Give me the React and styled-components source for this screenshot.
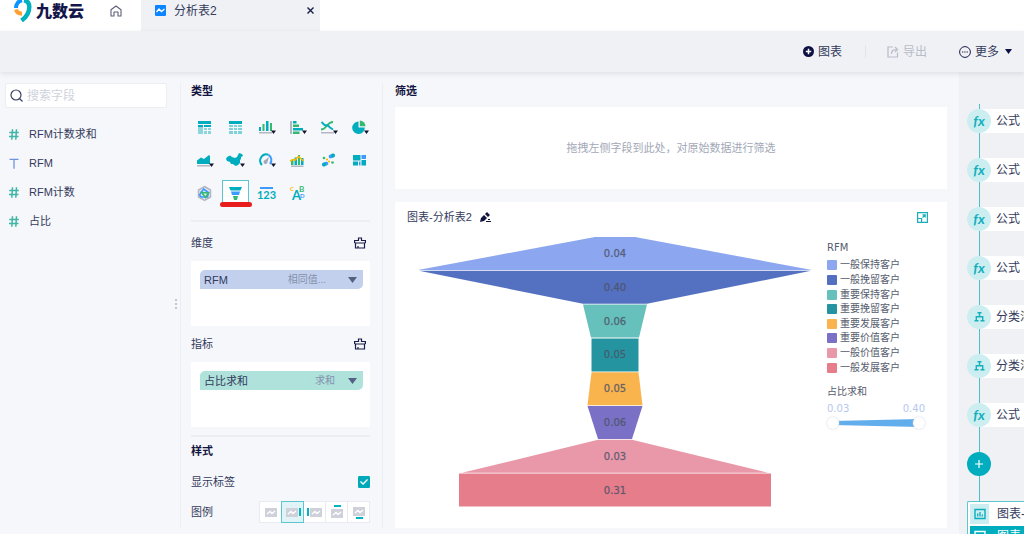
import React, { useState } from "react";
import styled, { createGlobalStyle } from "styled-components";

const fields = [
  { name: "RFM计数求和", type: "number" },
  { name: "RFM", type: "text" },
  { name: "RFM计数", type: "number" },
  { name: "占比", type: "number" },
];

const chartTypes = [
  { id: "group", label: "分组表" },
  { id: "cross", label: "明细表" },
  { id: "column", label: "柱形图", menu: true },
  { id: "bar", label: "条形图", menu: true },
  { id: "line", label: "折线图", menu: true },
  { id: "pie", label: "饼图", menu: true },
  { id: "area", label: "面积图", menu: true },
  { id: "map", label: "地图", menu: true },
  { id: "gauge", label: "仪表盘", menu: true },
  { id: "combo", label: "组合图" },
  { id: "scatter", label: "散点图" },
  { id: "tree", label: "矩形树图" },
  { id: "radar", label: "雷达图" },
  { id: "funnel", label: "漏斗图" },
  { id: "kpi", label: "指标卡" },
  { id: "cloud", label: "词云" },
];

const stages = [
  { name: "一般保持客户", value: "0.04", color: "#8ca6f0", top: 40, bottom: 394 },
  { name: "一般挽留客户", value: "0.40", color: "#5470c0", top: 392, bottom: 64 },
  { name: "重要保持客户", value: "0.06", color: "#66c0bb", top: 64, bottom: 48 },
  { name: "重要挽留客户", value: "0.05", color: "#2495a0", top: 47, bottom: 47 },
  { name: "重要发展客户", value: "0.05", color: "#f9b44e", top: 47, bottom: 55 },
  { name: "重要价值客户", value: "0.06", color: "#7a71c6", top: 55, bottom: 34 },
  { name: "一般价值客户", value: "0.03", color: "#e898a9", top: 34, bottom: 306 },
  { name: "一般发展客户", value: "0.31", color: "#e67d8b", top: 312, bottom: 312 },
];

const steps = ["公式", "公式", "公式", "公式", "分类汇总", "分类汇总", "公式"];

const typeArt = {
  group: (
    <>
      <path fill="#00adbe" d="M2 2h13v3H2zM2 6h5v2H2zM8 6h7v2H8z" />
      <path fill="#8bd6dd" d="M2 8h5v7H2zM8 9h3v2H8zM12 9h3v2h-3zM8 12h3v3H8zM12 12h3v3h-3z" />
    </>
  ),
  cross: (
    <>
      <path fill="#00adbe" d="M2 2h13v3H2z" />
      <path fill="#7fd2da" d="M2 6h4v2H2zM7 6h3v2H7zM11 6h4v2h-4zM2 9h4v2H2zM7 9h3v2H7zM11 9h4v2h-4zM2 12h4v3H2zM7 12h3v3H7zM11 12h4v3h-4z" />
    </>
  ),
  column: (
    <>
      <path fill="#00adbe" d="M1 8h2v4H1zM8 2h2.500v10H8z" />
      <path fill="#35b870" d="M4.500 5h2v7h-2zM12 4h2v8h-2z" />
      <path fill="#b4b7c4" d="M1 13h13v1.500H1z" />
    </>
  ),
  bar: (
    <>
      <path fill="#b4b7c4" d="M1 2h2v13H1z" />
      <path fill="#00adbe" d="M4 2h3.500v2.500H4zM4 9h10v2.500H4z" />
      <path fill="#35b870" d="M4 5.500h6V8H4zM4 12.500h6.500V15H4z" />
    </>
  ),
  line: (
    <>
      <path fill="none" stroke="#35b870" strokeWidth="1.800" d="M1 10.500c3 0 4-1.500 6-4s3-3.500 6-3.500" />
      <path fill="none" stroke="#00adbe" strokeWidth="1.800" d="M1.500 3l3 3c3 0 4 .5 5.500 2.500l3 2" />
      <path fill="#b4b7c4" d="M1 13h13v1.500H1z" />
    </>
  ),
  pie: (
    <>
      <path fill="#00adbe" d="M7.500 2.500V8.500h6.300A6.300 6.300 0 1 1 7.500 2.500z" />
      <path fill="#35b870" d="M8.800 1.500a6 6 0 0 1 5.700 5.800H8.800z" />
    </>
  ),
  area: (
    <>
      <path fill="#00adbe" d="M1 8.500l4-3 3 1.500 5-4 1 1v8H1z" />
      <path fill="#b4b7c4" d="M1 13h13v1.500H1z" />
    </>
  ),
  map: (
    <path
      fill="#00adbe"
      d="M0 5l3-1.500 2 1.500 3 1 2-1 1-2 1-2 3 1 1 2-2 1v2l-1 1v3l-2 2-2 1-2-1-1-1-2 0-1-2-3-1-1-2z"
    />
  ),
  gauge: (
    <>
      <path fill="none" stroke="#00adbe" strokeWidth="2" d="M4 13A6.200 6.200 0 0 1 10.500 2.800" />
      <path fill="none" stroke="#3c9bff" strokeWidth="2" d="M10.500 2.800A6.200 6.200 0 0 1 12 12" />
      <path fill="#a4a8b8" d="M11 5L9.500 10a2 2 0 1 1-2.500-2z" />
    </>
  ),
  combo: (
    <>
      <path fill="#35b870" d="M2 8h2.500v5H2zM9 3h2v10H9z" />
      <path fill="#00adbe" d="M5.500 5.500H8V13H5.500zM12 6h2.500v7H12z" />
      <path fill="none" stroke="#f9b900" strokeWidth="1.600" d="M1 9l3-1.500 2 .5 3.500-3.500L14.500 9" />
      <path fill="#b4b7c4" d="M2 13.500h12.500V15H2z" />
    </>
  ),
  scatter: (
    <>
      <path stroke="#3c9bff" strokeWidth="3.600" strokeLinecap="round" d="M10.500 4.500L13 3.500" />
      <circle cx="13" cy="3.500" r="1.900" fill="#00adbe" />
      <path stroke="#3c9bff" strokeWidth="3.600" strokeLinecap="round" d="M4 12.500l2.500-1" />
      <circle cx="4" cy="12.500" r="1.900" fill="#00adbe" />
      <circle cx="4" cy="6" r="1.300" fill="#35b870" />
      <circle cx="7" cy="7.500" r="1.100" fill="#f9b900" />
      <circle cx="9" cy="9.500" r="1.100" fill="#f9b900" />
      <circle cx="12.500" cy="10.500" r="1.300" fill="#35b870" />
    </>
  ),
  tree: (
    <>
      <path fill="#00adbe" d="M2 3h7.500v5.500H2zM2 9.500h5v4H2zM10.500 8H15v5.500h-4.500z" />
      <path fill="#3c9bff" d="M10.500 3H15v4h-4.500zM8 9.500h1.500v4H8z" />
    </>
  ),
  radar: (
    <>
      <path fill="#e4e6ee" stroke="#b4b7c4" strokeWidth="1.500" d="M8.500 1.500l6 3.500v7l-6 3.500-6-3.500V5z" />
      <path fill="none" stroke="#3c9bff" strokeWidth="1.600" d="M7.500 4l5 3.500-1 4.500H5L3.500 10z" />
      <path fill="none" stroke="#35b870" strokeWidth="1.600" d="M5.500 7.500l7 .5-3 4.500z" />
    </>
  ),
  funnel: (
    <>
      <path fill="#00adbe" d="M2 2h13l-1.500 3.500h-10z" />
      <path fill="#3c9bff" d="M4 6.500h9L12 10H5z" />
      <path fill="#35b870" d="M6 11h5l-1 4H7z" />
    </>
  ),
  kpi: (
    <>
      <path fill="#3c9bff" d="M2 2h13v2H2z" />
      <text x="8.500" y="14" textAnchor="middle" fontSize="11" fontWeight="700" fill="#00adbe">123</text>
    </>
  ),
  cloud: (
    <>
      <text x="3" y="15" fontSize="13" fontWeight="700" fill="#00adbe">A</text>
      <text x="10" y="7" fontSize="8" fontWeight="700" fill="#35b870">B</text>
      <text x="1" y="6" fontSize="6" fontWeight="700" fill="#f9b900">C</text>
      <text x="11" y="13" fontSize="6" fontWeight="700" fill="#3c9bff">D</text>
    </>
  ),
};

const legendPlaces = ["无", "右", "左", "上", "下"];
const legendMarks = [null, "M14 4h2v8h-2z", "M0 4h2v8H0z", "M5 1h7v2H5z", "M5 13h7v2H5z"];
const legendShift = [[0, 0], [-1, 0], [1, 0], [0, 1], [0, -1]];

function Caret() {
  return (
    <svg width="9" height="6" viewBox="0 0 9 6" aria-hidden="true">
      <path fill="currentColor" d="M0 0h9L4.500 6z" />
    </svg>
  );
}

function ClearIcon() {
  return (
    <svg width="12" height="12" viewBox="0 0 12 12" fill="none" stroke="#1a1d48" strokeWidth="1.200" aria-hidden="true">
      <path d="M.6 6V3.500H4.500V1h3v2.500h3.900V6M.6 6h10.800M1.500 6v5h9V6M4 9v2" />
    </svg>
  );
}

function ChartGlyph() {
  return (
    <svg width="12" height="12" viewBox="0 0 12 12" fill="none" stroke="currentColor" aria-hidden="true">
      <path strokeWidth="1.400" d="M1 1.500h10v9H1z" />
      <path strokeWidth="1.300" d="M3.700 5.500v3M6 4v4.500M8.300 6.500v2" />
    </svg>
  );
}

function Header() {
  return (
    <TopBar>
      <Brand href="#">
        <svg width="18" height="22" viewBox="0 0 18 22" fill="none" aria-hidden="true">
          <path stroke="#0a94ff" strokeWidth="4" d="M2 8C2 4 4.500 1 8 .3" />
          <path stroke="#ff9f35" strokeWidth="4" d="M2 9.500C2.500 12 4.500 13.500 8 13.700" />
          <path stroke="#00b1bf" strokeWidth="4.400" d="M10 .3c3.500 .7 5.300 3.500 5.300 6.700 0 6-3.300 10.500-7.800 13.500" />
        </svg>
        <BrandName>九数云</BrandName>
      </Brand>
      <HomeButton aria-label="首页">
        <svg width="12" height="12" viewBox="0 0 12 12" fill="none" stroke="#5d6078" aria-hidden="true">
          <path strokeWidth="1.100" strokeLinejoin="round" d="M1 11V4.800L6 1l5 3.800V11H8V7H4v4z" />
        </svg>
      </HomeButton>
      <Tab>
        <svg width="11" height="11" viewBox="0 0 11 11" aria-hidden="true">
          <rect width="11" height="11" rx="1" fill="#0a84ff" />
          <path fill="none" stroke="#fff" strokeWidth="1.300" d="M1.500 7L4 4l2.500 2.500L9.500 4" />
        </svg>
        <TabName>分析表2</TabName>
        <CloseButton aria-label="关闭">
          <svg width="7" height="7" viewBox="0 0 7 7" stroke="#1a1d48" strokeWidth="1.400" aria-hidden="true">
            <path d="M.5.5l6 6M6.500.5l-6 6" />
          </svg>
        </CloseButton>
      </Tab>
    </TopBar>
  );
}

function Toolbar() {
  return (
    <ToolRow>
      <ToolButton>
        <svg width="11" height="11" viewBox="0 0 11 11" aria-hidden="true">
          <circle cx="5.500" cy="5.500" r="5.500" fill="#0d1045" />
          <path stroke="#fff" strokeWidth="1.500" d="M5.500 2.800v5.400M2.800 5.500h5.400" />
        </svg>
        图表
      </ToolButton>
      <ToolDivider />
      <ToolButton disabled>
        <svg width="12" height="12" viewBox="0 0 12 12" fill="none" stroke="currentColor" strokeWidth="1.200" aria-hidden="true">
          <path d="M6 1H1v10h9.500V6.500M4.500 8c0-3 1-4.500 5-4.500M8 1l2.500 2.500L8 6" />
        </svg>
        导出
      </ToolButton>
      <ToolButton $wide>
        <svg width="12" height="12" viewBox="0 0 12 12" fill="none" stroke="#1a1d48" aria-hidden="true">
          <circle cx="6" cy="6" r="5.400" />
          <path strokeWidth="1.200" strokeDasharray="1.300 1" d="M3 6h6" />
        </svg>
        更多
        <MoreCaret>
          <svg width="7" height="5" viewBox="0 0 7 5" aria-hidden="true">
            <path fill="#0d1045" d="M0 0h7L3.500 5z" />
          </svg>
        </MoreCaret>
      </ToolButton>
    </ToolRow>
  );
}

function FieldPanel() {
  return (
    <Fields>
      <SearchBox>
        <svg width="13" height="13" viewBox="0 0 13 13" fill="none" stroke="#3d4263" strokeWidth="1.200" aria-hidden="true">
          <circle cx="6" cy="6" r="5" />
          <path d="M9.500 9.500l3 3" />
        </svg>
        <SearchInput type="text" placeholder="搜索字段" aria-label="搜索字段" />
      </SearchBox>
      <FieldList>
        {fields.map((field) => (
          <FieldItem key={field.name}>
            <svg width="10" height="11" viewBox="0 0 10 11" fill="none" aria-hidden="true">
              {field.type === "number" ? (
                <path stroke="#3fb5a5" strokeWidth="1.500" d="M3.500 .3L2.800 10.700M7.500 .3L6.800 10.700M.3 3.500h9.500M0 7.500h9.500" />
              ) : (
                <path stroke="#6f93e0" strokeWidth="1.300" d="M.5 1.300h9M5 1.300v9.500" />
              )}
            </svg>
            {field.name}
          </FieldItem>
        ))}
      </FieldList>
      <DragHandle />
    </Fields>
  );
}

function SettingsPanel() {
  const [chartType, setChartType] = useState("funnel");
  const [place, setPlace] = useState(1);
  const [showLabel, setShowLabel] = useState(true);

  return (
    <Settings>
      <Heading>类型</Heading>
      <TypeGrid>
        {chartTypes.map((type) => (
          <TypeButton
            key={type.id}
            aria-label={type.label}
            $active={chartType === type.id}
            onClick={() => setChartType(type.id)}
          >
            <TypeIcon width="17" height="16" viewBox="0 0 17 16" aria-hidden="true">
              {typeArt[type.id]}
              {type.menu && <path fill="#12142c" d="M13 11.500h5L15.500 15z" />}
            </TypeIcon>
            {chartType === type.id && <Underline />}
          </TypeButton>
        ))}
      </TypeGrid>
      <Rule />
      <SectionHead>
        维度
        <ClearButton aria-label="清空维度"><ClearIcon /></ClearButton>
      </SectionHead>
      <DropZone>
        <Pill $color="#c2d0ee">
          RFM
          <PillHint $gap="22px">相同值...</PillHint>
          <Caret />
        </Pill>
      </DropZone>
      <SectionHead>
        指标
        <ClearButton aria-label="清空指标"><ClearIcon /></ClearButton>
      </SectionHead>
      <DropZone>
        <Pill $color="#aee2db">
          占比求和
          <PillHint $gap="13px">求和</PillHint>
          <Caret />
        </Pill>
      </DropZone>
      <Rule $tight />
      <StyleHeading>样式</StyleHeading>
      <OptionRow>
        <label htmlFor="show-label">显示标签</label>
        <Check
          id="show-label"
          type="checkbox"
          checked={showLabel}
          onChange={(e) => setShowLabel(e.target.checked)}
        />
      </OptionRow>
      <OptionRow>
        <span id="legend-label">图例</span>
        <LegendGroup role="radiogroup" aria-labelledby="legend-label">
          {legendPlaces.map((name, i) => (
            <LegendOption key={name} $active={place === i}>
              <HiddenRadio
                type="radio"
                name="legend"
                aria-label={name}
                checked={place === i}
                onChange={() => setPlace(i)}
              />
              <svg width="16" height="16" viewBox="0 0 16 16" fill="none" aria-hidden="true">
                <g transform={`translate(${legendShift[i].join(" ")})`}>
                  <path fill="#ced0da" d="M2 4h12v9H2z" />
                  <path stroke="#fff" strokeWidth="1.300" d="M4 10l3-2.500 2 2L12 7" />
                </g>
                {legendMarks[i] && <path fill="#00b4c3" d={legendMarks[i]} />}
              </svg>
            </LegendOption>
          ))}
        </LegendGroup>
      </OptionRow>
    </Settings>
  );
}

function FunnelChart() {
  const center = 208;
  const pitch = 33.8;
  return (
    <Funnel viewBox="0 0 412 290" role="img" aria-label="图表-分析表2">
      {stages.map((stage, i) => {
        const y = 5 + i * pitch;
        const t = stage.top / 2;
        const b = stage.bottom / 2;
        return (
          <g key={stage.name}>
            <polygon
              fill={stage.color}
              points={`${center - t},${y} ${center + t},${y} ${center + b},${y + 33} ${center - b},${y + 33}`}
            />
            <FunnelLabel x={center} y={y + 20}>{stage.value}</FunnelLabel>
          </g>
        );
      })}
    </Funnel>
  );
}

function ChartCard() {
  const [low, setLow] = useState(0);
  const [high, setHigh] = useState(100);
  return (
    <Card>
      <CardHead>
        图表-分析表2
        <IconButton aria-label="编辑标题">
          <svg width="11" height="11" viewBox="0 0 11 11" aria-hidden="true">
            <path fill="#12143f" d="M0 10l1-4 3-3 3 3-3 3zM5 2l2-2 3 3-2 2zM6 9h5v1H6zM8 7h2v1H8z" />
          </svg>
        </IconButton>
        <ExpandButton aria-label="放大">
          <svg width="11" height="11" viewBox="0 0 11 11" fill="none" stroke="#1badbb" aria-hidden="true">
            <path strokeWidth="1.200" d="M.6.6h9.800v9.800H.6zM.6 6.500h4v4M5.500 5.500L8 3M5.500 2.800h2.700v2.700" />
          </svg>
        </ExpandButton>
      </CardHead>
      <ChartBody>
        <FunnelChart />
        <Legend>
          <div>RFM</div>
          <LegendList>
            {stages.map((stage) => (
              <LegendItem key={stage.name}>
                <Swatch $color={stage.color} />
                {stage.name}
              </LegendItem>
            ))}
          </LegendList>
          <div>占比求和</div>
          <RangeValues>
            <span>0.03</span>
            <span>0.40</span>
          </RangeValues>
          <RangeBox>
            <svg width="100%" height="8" viewBox="0 0 98 8" preserveAspectRatio="none" aria-hidden="true">
              <path fill="#62aeec" d="M6 2l86-2v8L6 6z" />
            </svg>
            <RangeInput type="range" aria-label="最小值" value={low} onChange={(e) => setLow(+e.target.value)} />
            <RangeInput type="range" aria-label="最大值" value={high} onChange={(e) => setHigh(+e.target.value)} />
          </RangeBox>
        </Legend>
      </ChartBody>
    </Card>
  );
}

function StepPanel() {
  return (
    <Steps>
      <Connector $short />
      {steps.map((step, i) => (
        <React.Fragment key={i}>
          <Step>
            <StepBadge>
              {step === "公式" ? (
                "fx"
              ) : (
                <svg width="11" height="10" viewBox="0 0 11 10" fill="none" stroke="currentColor" strokeWidth="1.400" aria-hidden="true">
                  <path d="M3.500.8h4M5.500 1v4M2.300 8V4.800h6.400V8M.5 8.800h4M6.500 8.800h4" />
                </svg>
              )}
            </StepBadge>
            {step}
          </Step>
          <Connector />
        </React.Fragment>
      ))}
      <AddStep aria-label="添加步骤">
        <svg width="8" height="8" viewBox="0 0 8 8" stroke="#fff" strokeWidth="1.200" aria-hidden="true">
          <path d="M4 0v8M0 4h8" />
        </svg>
      </AddStep>
      <Connector />
      <Outputs>
        <Output>
          <OutputIcon><ChartGlyph /></OutputIcon>
          图表-分析表
        </Output>
        <Output $active>
          <OutputIcon $active><ChartGlyph /></OutputIcon>
          图表-分析表2
        </Output>
      </Outputs>
    </Steps>
  );
}

function App() {
  return (
    <Page>
      <GlobalStyle />
      <Header />
      <Toolbar />
      <Workspace>
        <FieldPanel />
        <SettingsPanel />
        <Main>
          <Heading>筛选</Heading>
          <FilterZone>拖拽左侧字段到此处，对原始数据进行筛选</FilterZone>
          <ChartCard />
        </Main>
        <StepPanel />
      </Workspace>
    </Page>
  );
}

export default App;

const GlobalStyle = createGlobalStyle`
  * {
    box-sizing: border-box;
  }

  body {
    margin: 0;
    font-family: "Liberation Sans", "Noto Sans CJK SC", sans-serif;
    font-size: 11px;
    line-height: 16px;
    color: #343b5c;
    background: #f6f7fa;
  }

  button {
    font: inherit;
    color: inherit;
    background: none;
    border: 0;
    padding: 0;
    cursor: pointer;
  }

  svg {
    display: block;
    flex: none;
  }
`;

const Page = styled.div`
  display: flex;
  flex-direction: column;
  height: 100vh;
  overflow: hidden;
  white-space: nowrap;
`;

const TopBar = styled.header`
  display: flex;
  flex: none;
  height: 31px;
  background: #fff;
`;

const Brand = styled.a`
  display: flex;
  align-items: center;
  gap: 4px;
  height: 22px;
  margin-left: 14px;
  text-decoration: none;
`;

const BrandName = styled.span`
  padding-top: 2px;
  font-size: 16px;
  font-weight: 900;
  color: #14164a;
`;

const HomeButton = styled.button`
  display: flex;
  align-items: center;
  justify-content: center;
  width: 12px;
  height: 22px;
  margin: 0 19px 0 26px;
`;

const Tab = styled.div`
  display: flex;
  align-items: center;
  gap: 8px;
  width: 179px;
  padding: 0 6px 10px 14px;
  background: #f0f1f5;
`;

const TabName = styled.span`
  flex: 1;
  font-size: 12px;
`;

const CloseButton = styled.button``;

const ToolRow = styled.div`
  display: flex;
  flex: none;
  align-items: center;
  justify-content: flex-end;
  height: 41px;
  padding-right: 12px;
  background: #f0f1f5;
  box-shadow: 0 2px 5px rgba(30, 40, 80, 0.1);
  z-index: 1;
`;

const ToolButton = styled.button`
  display: flex;
  align-items: center;
  gap: 4px;
  margin-left: ${(props) => (props.$wide ? "32px" : "0")};
  font-size: 12px;

  &:disabled {
    color: #b9bcc9;
  }
`;

const ToolDivider = styled.div`
  width: 1px;
  height: 13px;
  margin: 0 21px 0 23px;
  background: #e3e5ec;
`;

const MoreCaret = styled.span`
  margin-left: 2px;
`;

const Workspace = styled.div`
  display: grid;
  grid-template-columns: 180px 203px 1fr 65px;
  flex: 1;
  min-height: 0;
`;

const Fields = styled.aside`
  position: relative;
  padding: 11px 13px 0 5px;
`;

const SearchBox = styled.div`
  display: flex;
  align-items: center;
  gap: 4px;
  height: 25px;
  padding: 0 4px;
  background: #fff;
  border: 1px solid #eceef2;
  border-radius: 2px;
`;

const SearchInput = styled.input`
  flex: 1;
  min-width: 0;
  border: 0;
  outline: 0;
  padding: 0;
  font: inherit;
  font-size: 12px;
  background: none;

  &::placeholder {
    color: #ced2dc;
  }
`;

const FieldList = styled.ul`
  display: flex;
  flex-direction: column;
  gap: 13px;
  margin: 18px 0 0;
  padding: 0 0 0 4px;
  list-style: none;
`;

const FieldItem = styled.li`
  display: flex;
  align-items: center;
  gap: 10px;
`;

/* three dots on the edge between the field list and the settings */
const DragHandle = styled.div`
  position: absolute;
  right: 3px;
  top: 50%;
  width: 2px;
  height: 2px;
  background: #c3c6d0;
  box-shadow: 0 -4px #c3c6d0, 0 4px #c3c6d0;
`;

const Settings = styled.section`
  margin: 11px 0 6px;
  padding: 0 12px 0 10px;
  border-left: 1px solid #eceef2;
  border-right: 1px solid #eceef2;
`;

const Heading = styled.h2`
  margin: 0;
  font-size: 11px;
  line-height: 16px;
  font-weight: 700;
  color: #12143f;
`;

const TypeGrid = styled.div`
  display: grid;
  grid-template-columns: repeat(6, 27px);
  grid-auto-rows: 25px;
  gap: 8px 4px;
  margin-top: 15px;
`;

const TypeButton = styled.button`
  position: relative;
  display: flex;
  align-items: center;
  justify-content: center;
  border: 1px solid ${(props) => (props.$active ? "#5cc6cf" : "transparent")};
  background: ${(props) => (props.$active ? "#fff" : "none")};
`;

const TypeIcon = styled.svg`
  overflow: visible;
  font-family: Lato, sans-serif;
`;

const Underline = styled.span`
  position: absolute;
  left: -3px;
  right: -4px;
  bottom: -3px;
  height: 5px;
  border-radius: 3px;
  background: #e81e1e;
`;

const Rule = styled.hr`
  height: 2px;
  margin: ${(props) => (props.$tight ? "8px 0 6px" : "15px 0 11px")};
  border: 0;
  background: #eceef2;
`;

const SectionHead = styled.div`
  display: flex;
  align-items: center;
  justify-content: space-between;
  height: 20px;
  padding-right: 4px;
`;

const ClearButton = styled.button``;

const DropZone = styled.div`
  height: 65px;
  margin: 8px 0;
  padding: 9px 7px 0 9px;
  background: #fff;
`;

const Pill = styled.button`
  display: flex;
  align-items: center;
  width: 100%;
  height: 19px;
  padding: 0 6px 0 4px;
  border-radius: 5px 0 5px 0;
  background: ${(props) => props.$color};

  svg {
    color: #536283;
  }
`;

const PillHint = styled.span`
  margin: 0 ${(props) => props.$gap} 0 auto;
  font-size: 10px;
  color: #8491ac;
`;

const StyleHeading = styled(Heading)`
  margin-bottom: 12px;
`;

const OptionRow = styled.div`
  display: flex;
  align-items: center;
  justify-content: space-between;
  height: 22px;
  margin-top: 8px;
`;

const Check = styled.input`
  appearance: none;
  display: grid;
  place-items: center;
  width: 12px;
  height: 12px;
  margin: 0;
  border: 1px solid #00a9b8;
  border-radius: 1px;

  &:checked {
    background: #00a9b8;
  }

  &:checked::before {
    content: "";
    width: 8px;
    height: 8px;
    background: #fff;
    clip-path: polygon(0 50%, 12% 38%, 38% 62%, 88% 12%, 100% 25%, 38% 88%);
  }
`;

const LegendGroup = styled.div`
  display: flex;
`;

const LegendOption = styled.label`
  position: relative;
  display: flex;
  align-items: center;
  justify-content: center;
  width: 23px;
  height: 22px;
  margin-left: -1px;
  border: 1px solid ${(props) => (props.$active ? "#5cc6cf" : "#e9ebf0")};
  background: ${(props) => (props.$active ? "#e0f3f6" : "#fff")};
  z-index: ${(props) => (props.$active ? 1 : 0)};
`;

const HiddenRadio = styled.input`
  position: absolute;
  inset: 0;
  margin: 0;
  opacity: 0;
`;

const Main = styled.main`
  display: flex;
  flex-direction: column;
  min-width: 0;
  padding: 11px 12px 6px;
`;

const FilterZone = styled.div`
  display: flex;
  align-items: center;
  justify-content: center;
  flex: none;
  height: 82px;
  margin: 8px 0 13px;
  background: #fff;
  color: #a3a8b7;
`;

const Card = styled.section`
  display: flex;
  flex-direction: column;
  flex: 1;
  min-height: 0;
  background: #fff;
`;

const CardHead = styled.div`
  display: flex;
  align-items: center;
  gap: 8px;
  height: 30px;
  padding: 0 19px 0 12px;
`;

const IconButton = styled.button``;

const ExpandButton = styled.button`
  margin-left: auto;
`;

const ChartBody = styled.div`
  display: flex;
  flex: 1;
  min-height: 0;
  gap: 8px;
  padding: 0 22px 6px 12px;
`;

const Funnel = styled.svg`
  flex: 1;
  min-width: 0;
  height: 100%;
`;

const FunnelLabel = styled.text`
  font-family: "DejaVu Sans", sans-serif;
  font-size: 10px;
  text-anchor: middle;
  fill: #4b5268;
  fill-opacity: 0.8;
  stroke: #4b5268;
  stroke-opacity: 0.4;
  stroke-width: 0.6px;
`;

const Legend = styled.div`
  width: 98px;
  padding-top: 8px;
  font-family: "DejaVu Sans", "Noto Sans CJK SC", sans-serif;
  font-size: 10px;
  color: #565c6e;
`;

const LegendList = styled.ul`
  display: grid;
  grid-auto-rows: 1fr;
  height: 117px;
  margin: 2px 0 9px;
  padding: 0;
  list-style: none;
`;

const LegendItem = styled.li`
  display: flex;
  align-items: center;
  gap: 3px;
  line-height: 14px;
`;

const Swatch = styled.span`
  width: 10px;
  height: 10px;
  border-radius: 1px;
  background: ${(props) => props.$color};
`;

const RangeValues = styled.div`
  display: flex;
  justify-content: space-between;
  margin-top: 2px;
  line-height: 14px;
  color: #b5c8ef;
`;

const RangeBox = styled.div`
  position: relative;
  padding: 3px 0;
`;

const RangeInput = styled.input`
  position: absolute;
  inset: 0;
  appearance: none;
  width: 100%;
  height: 14px;
  margin: 0;
  background: none;
  pointer-events: none;

  &::-webkit-slider-thumb {
    appearance: none;
    width: 12px;
    height: 12px;
    border-radius: 50%;
    background: #fff;
    box-shadow: 0 0 2px #c6cbd8;
    pointer-events: auto;
  }
`;

const Steps = styled.aside`
  padding: 32px 0 0 8px;
  overflow: hidden;
  background: #f0f1f5;
`;

const Connector = styled.div`
  width: 1px;
  height: ${(props) => (props.$short ? "5px" : "25px")};
  margin-left: 12px;
  background: #4fbcc6;
`;

const Step = styled.div`
  display: flex;
  align-items: center;
  gap: 5px;
  height: 24px;
  margin-left: 12px;
  background: #fff;
  font-size: 12px;
`;

const StepBadge = styled.span`
  display: flex;
  align-items: center;
  justify-content: center;
  flex: none;
  width: 24px;
  height: 24px;
  margin-left: -12px;
  border-radius: 50%;
  background: #cceef1;
  color: #14b0bd;
  font-family: Lato, sans-serif;
  font-size: 14px;
  font-style: italic;
  font-weight: 700;
`;

const AddStep = styled.button`
  display: flex;
  align-items: center;
  justify-content: center;
  width: 24px;
  height: 24px;
  border-radius: 50%;
  background: #00adbe;
`;

const Outputs = styled.div`
  border: 1px solid #5cc6cf;
  border-right: 0;
  border-radius: 2px 0 0 0;
  background: #fff;
`;

const Output = styled.div`
  display: flex;
  align-items: center;
  gap: 8px;
  height: 20px;
  margin: 2px 0 2px 2px;
  font-size: 12px;
  background: ${(props) => (props.$active ? "#00adbe" : "#fff")};
  color: ${(props) => (props.$active ? "#fff" : "inherit")};
`;

const OutputIcon = styled.span`
  display: flex;
  align-items: center;
  justify-content: center;
  flex: none;
  width: 19px;
  height: 20px;
  background: ${(props) => (props.$active ? "#00adbe" : "#cceef1")};
  color: ${(props) => (props.$active ? "#fff" : "#0badbc")};
`;
